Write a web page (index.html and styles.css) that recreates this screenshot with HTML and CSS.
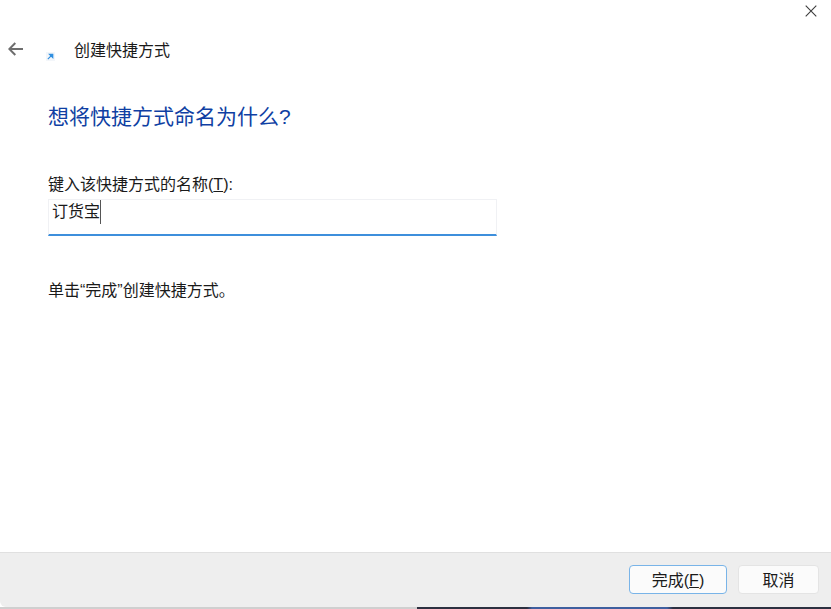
FILE: index.html
```html
<!DOCTYPE html>
<html lang="zh-CN">
<head>
<meta charset="utf-8">
<title>创建快捷方式</title>
<link rel="stylesheet" href="styles.css">
</head>
<body>
<div class="dialog">
  <div class="closebar">
    <svg class="close" width="12" height="12" viewBox="0 0 12 12"><path d="M.7.7l10.6 10.6M11.3.7L.7 11.3" stroke="#3c3c3c" stroke-width="1.1" fill="none"/></svg>
  </div>
  <header class="header">
    <svg class="back" width="16" height="14" viewBox="0 0 16 14"><path d="M15 7H1.5M7.3 1L1.3 7l6 6" stroke="#6e6e6e" stroke-width="2" fill="none"/></svg>
    <svg class="shortcut" width="9" height="9" viewBox="0 0 9 9"><rect width="9" height="9" fill="#f3f6fa"/><path d="M1.8 7.2L6 3M3.4 2.2h3.4v3.4z" stroke="#2f8fe0" stroke-width="1.1" fill="#2f8fe0"/></svg>
    <span class="title">创建快捷方式</span>
  </header>
  <main class="content">
    <h1 class="heading">想将快捷方式命名为什么?</h1>
    <label class="label" for="name">键入该快捷方式的名称(<u>T</u>):</label>
    <div class="input" id="name"><span class="value">订货宝</span></div>
    <p class="hint">单击“完成”创建快捷方式。</p>
  </main>
  <footer class="footer">
    <button class="btn primary">完成(<u>F</u>)</button>
    <button class="btn">取消</button>
  </footer>
  <div class="edge"><span class="edge-light"></span><span class="edge-dark"></span></div>
</div>
</body>
</html>
```
FILE: styles.css
```css
* { box-sizing: border-box; }
html, body { margin: 0; height: 100%; background: #fff; }
body { font-family: "Liberation Sans", "Noto Sans CJK SC", sans-serif; color: #1a1a1a; overflow: hidden; }
.dialog { height: 609px; display: flex; flex-direction: column; }
.closebar { height: 38px; display: flex; justify-content: flex-end; padding: 5px 14px 0 0; }
.close { display: block; }
.header { height: 24px; display: flex; align-items: center; padding-left: 8px; }
.back { margin-top: -2px; }
.shortcut { margin: 13px 0 0 22px; }
.title { margin: -2px 0 0 19px; font-size: 16px; }
.content { flex: 1; padding: 0 48px; }
.heading { margin: 40px 0 0; font-size: 21px; line-height: 30px; font-weight: 400; color: #0f3fa3; }
.label { display: block; margin-top: 41px; font-size: 16px; line-height: 24px; }
.input { width: 449px; height: 37px; margin-top: 2px; border: 1px solid #f0f1f4; border-bottom: 2px solid #3d8fdc; padding: 0 0 0 3px; font-size: 16px; line-height: 24px; }
.value { border-right: 1px solid #555; display: inline-block; height: 24px; }
.hint { margin: 43px 0 0; font-size: 16px; line-height: 24px; }
.footer { height: 55px; background: #eeeeee; border-top: 1px solid #e0e0e0; display: flex; justify-content: flex-end; align-items: center; gap: 11px; padding: 0 12px 1px 0; border-bottom-left-radius: 6px; }
.btn { height: 29px; width: 81px; background: #fbfbfb; border: 1px solid #e4e4e4; border-radius: 4px; font: inherit; font-size: 16px; color: #1a1a1a; padding: 0 0 2px; }
.primary { width: 98px; border: 1px solid #79b4e8; }
.edge { height: 2px; display: flex; }
.edge-light { width: 417px; background: #cfcfcf; }
.edge-dark { flex: 1; background: linear-gradient(to right, #2c3040 0, #2c3040 110px, #3f5f9f 115px, #3f5f9f 250px, #2c3040 256px); }
```
